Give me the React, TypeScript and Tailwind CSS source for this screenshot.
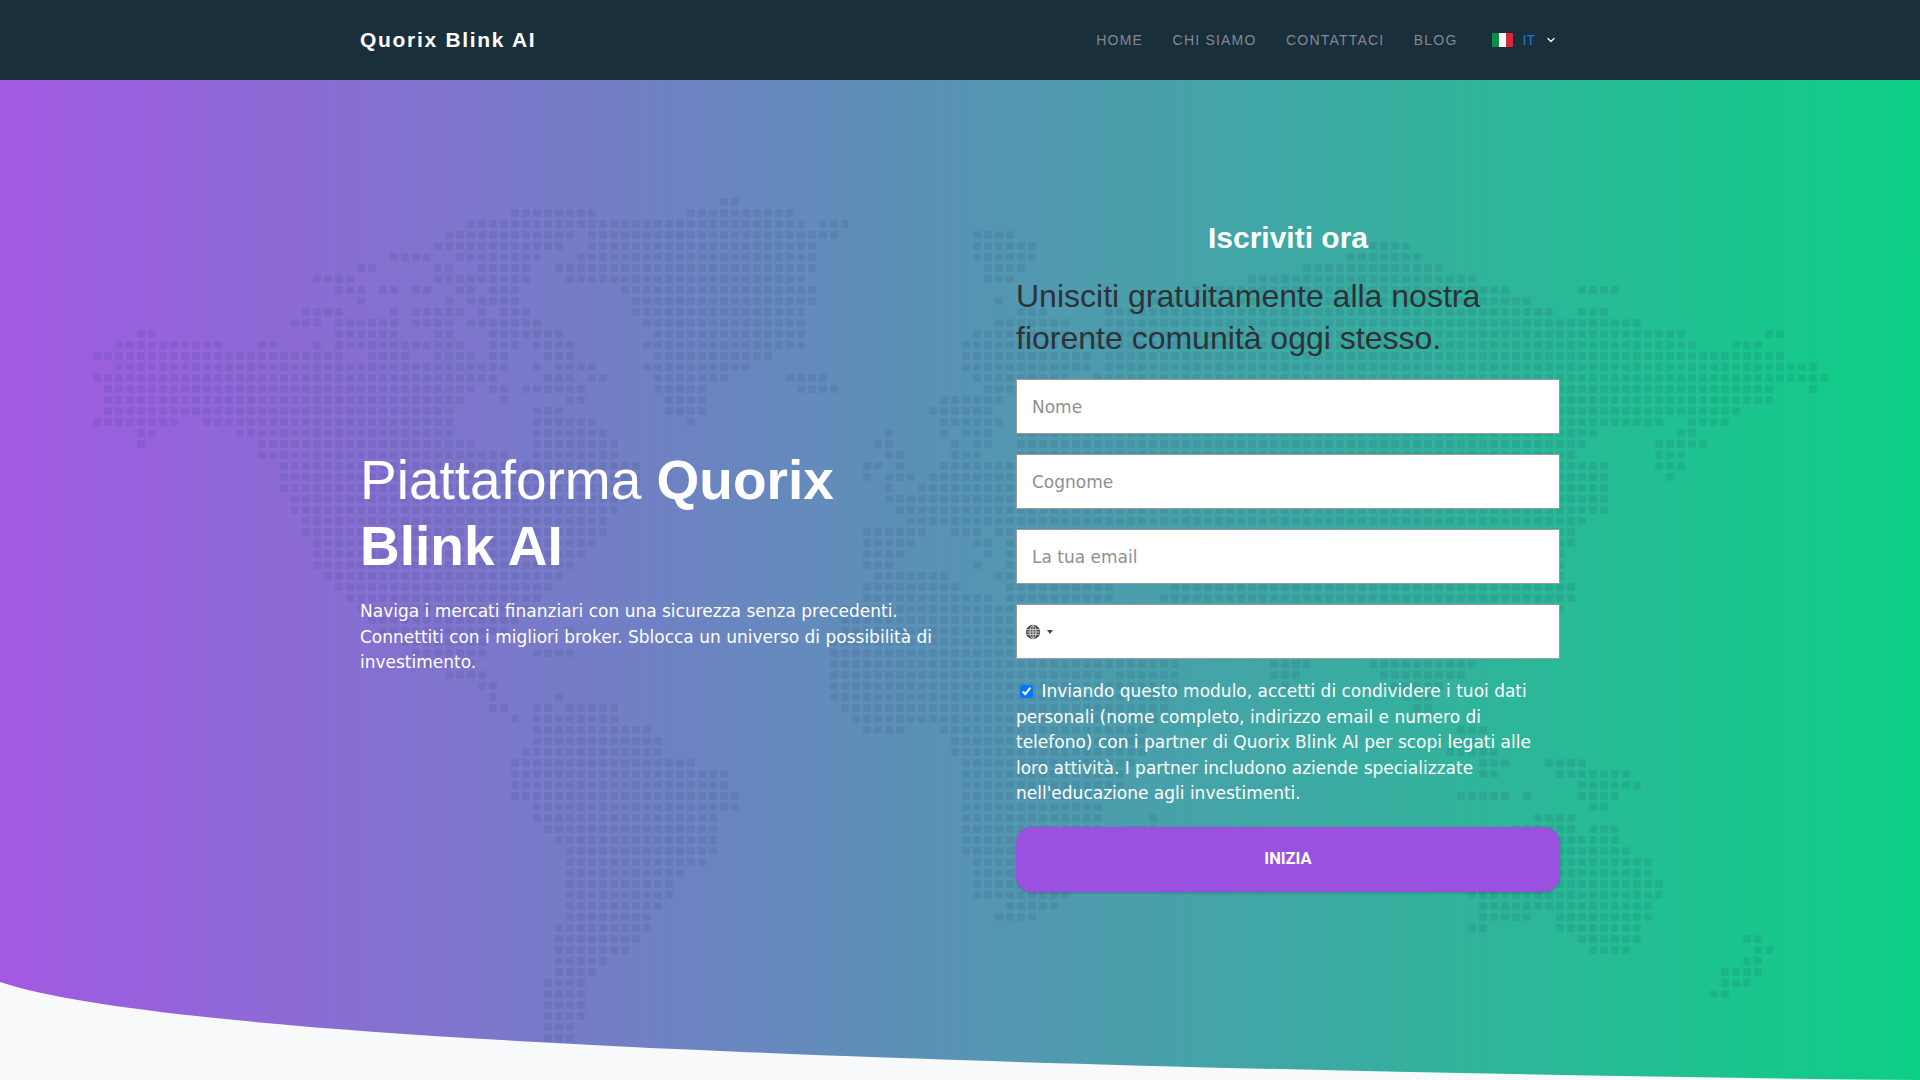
import React from 'react';
import { ChevronDown } from 'lucide-react';

// Dotted world map: one string per row, column runs separated by spaces
const MAP_ROWS = [
  '57-58',
  '38-45 54-63',
  '34-64 66-68',
  '32-43 45-67 80-83',
  '31-42 45-65 80-85 116-119',
  '27-30 33-40 44-65 80-85 114-120',
  '24-25 31-32 35-39 42-65 81-84 110-122',
  '20-23 31-39 43-64 81-83 105-125',
  '22-24 26-27 29-30 33-34 36-38 48-65 100-128 135-138',
  '24 32 34-38 49-65 82 96-130',
  '19-22 27 29-33 35 37-39 49-64 84-86 92-132 135-137',
  '18-20 22-27 29-32 34-40 50-64 82-88 92-140',
  '4-5 22-27 31-32 36-42 51-64 80-88 90-144 152-153',
  '2-11 15-16 20 22-33 36-38 40-43 50-64 79-89 91-145 149-151',
  '0-22 25-28 31-34 36-37 41-43 51-61 79-90 92-153',
  '2-37 40 42-45 50-59 79-90 92-156',
  '0-36 41-43 45-46 51-57 63-66 80-88 91-157',
  '1-34 36-37 39-44 51-55 64-67 81-87 90-152 156',
  '1-33 37 43-44 52-55 77-82 84-152',
  '1-32 40-42 52-55 76-81 84-149',
  '0-7 10-32 40-45 54 77-82 84-142 145-148',
  '4-5 13-32 40-46 72 77 79-81 84-136 144-145',
  '4 15-34 40-47 71-72 78 80-81 84-135 142-146',
  '15-37 40-47 72-73 78-80 84-134 142-144',
  '17-49 70-71 73 77-137 142-144',
  '17-49 70 72-74 76-137 143',
  '17-48 72 75-137',
  '18-48 72-137',
  '18-47 73-137',
  '19-46 74-135',
  '19-46 70-75 78-80 82-90 96-134',
  '20-45 70-74 80-81 83-90 97-134',
  '20-44 70-73 81 83-91 97-133',
  '20-43 70-72 80 83-92 98-133',
  '21-42 71-77 82-93 98-133',
  '22-41 70-78 83-92 98-134',
  '23-40 70-81 83-92 97-134',
  '24-39 68-92 98-133',
  '25-38 68-94 100-132',
  '26-37 43 68-96 101-130',
  '28-35 67-97 103-128',
  '29-35 40-43 67-98 105-112 114-126',
  '30-34 67-98 107-110 116-125',
  '32-35 67-91 93-98 107-109 117-124',
  '35-36 67-98 108 118-122',
  '36 42 67-97 119-121',
  '36-37 40-41 43-47 68-97 120-121',
  '38 40-47 69-96',
  '40-50 70-73 77-95 124-126',
  '40-51 78-95 124-125',
  '39-51 78-95 123-127',
  '38-54 79-94 126-128 132-135',
  '38-57 79-93 126-127 133-139',
  '38-57 79-93 135-140',
  '38-58 79-92 124-128 130 135-138',
  '40-58 79-91 136-137',
  '40-56 79-91 96 131-134',
  '41-56 79-91 94-96 129-134 136-138',
  '42-56 79-92 128-138',
  '43-56 79-91 126-139',
  '43-55 80-90 125-141',
  '43-53 80-89 125-141',
  '43-52 80-88 125-142',
  '43-52 80-88 125-142',
  '43-51 83-87 126-141',
  '43-50 82-85 126-130 133-141',
  '42-50 125-126 133-140',
  '42-49 135-140 150-151',
  '42-48 136-139 151-152',
  '42-46 150-151',
  '42-45 148-151',
  '41-44 148-150',
  '41-44 147-148',
  '41-44',
  '41-44',
  '41-43',
  '41-43',
];

const mapDots = MAP_ROWS.flatMap((row, r) =>
  row.split(' ').flatMap((run) => {
    const [from, to] = run.split('-').map(Number);
    const cols = [];
    for (let c = from; c <= (to ?? from); c++) cols.push([c, r]);
    return cols;
  })
);

const WorldMap = () => (
  <svg className="absolute left-0 top-0" width="1920" height="1000" viewBox="0 0 1920 1000">
    <g fill="#1e3468" fillOpacity="0.11">
      {mapDots.map(([c, r]) => (
        <rect key={`${c}-${r}`} x={93.2 + c * 11} y={118.2 + r * 11} width="7.6" height="7.6" rx="1" />
      ))}
    </g>
  </svg>
);

const BottomCurve = () => (
  <svg className="absolute left-0 top-0" width="1920" height="1000" viewBox="0 80 1920 1000">
    <path d="M0 982C100 1015 380 1036 700 1050C1000 1064 1500 1076 1920 1080L1920 1080L0 1080Z" fill="#f8f9fb" />
  </svg>
);

const GlobeIcon = () => (
  <svg width="16" height="16" viewBox="0 0 16 16" fill="none">
    <circle cx="8" cy="8" r="7.2" fill="#4a4a4a" />
    <g stroke="#e8e8e8" strokeWidth="0.8">
      <ellipse cx="8" cy="8" rx="3" ry="6.4" />
      <path d="M8 1.4V14.6M1.8 5.6H14.2M1.4 8H14.6M1.8 10.4H14.2" />
    </g>
  </svg>
);

const inputClass =
  "w-full h-[55px] bg-white border border-[#9b9b9b] px-[15px] text-[17px] text-[#333] placeholder:text-[#8f8f8f] font-['DejaVu_Sans',sans-serif] outline-none";

const navLinks = ['HOME', 'CHI SIAMO', 'CONTATTACI', 'BLOG'];

export default function App() {
  return (
    <div className="w-[1920px] h-[1080px] overflow-hidden bg-[#f8f9fb] font-['Liberation_Sans',sans-serif]">
      <nav className="h-20 bg-[#1a2f3c]">
        <div className="w-[1200px] h-full mx-auto flex items-center justify-between">
          <a className="text-[21px] font-bold tracking-[1.7px] text-white">Quorix Blink AI</a>
          <div className="flex items-center pr-[3px]">
            <div className="flex items-center gap-[29.5px] text-[14px] tracking-[1.2px] text-[#84898d]">
              {navLinks.map((link) => (
                <a key={link}>{link}</a>
              ))}
            </div>
            <div className="flex items-center ml-[34px]">
              <div className="flex w-[21px] h-[14px]">
                <span className="flex-1 bg-[#0b8f46]" />
                <span className="flex-1 bg-white" />
                <span className="flex-1 bg-[#d32a35]" />
              </div>
              <span className="ml-[10px] text-[14px] text-[#1c78d6]">IT</span>
              <ChevronDown className="ml-[10px] w-[12px] h-[12px] text-white" strokeWidth={2.5} />
            </div>
          </div>
        </div>
      </nav>

      <section className="relative h-[1000px] overflow-hidden bg-[linear-gradient(90deg,#a259e3,#0dcf85)]">
        <WorldMap />
        <BottomCurve />
        <div className="relative w-[1200px] mx-auto pt-[138px] flex items-center justify-between">
          <div className="w-[586px] mt-[13px] text-white">
            <h1 className="text-[55px] leading-[66px] font-normal">
              Piattaforma <b>Quorix Blink AI</b>
            </h1>
            <p className="mt-[20px] text-[17px] leading-[25.5px] font-['DejaVu_Sans',sans-serif]">
              Naviga i mercati finanziari con una sicurezza senza precedenti. Connettiti con i migliori broker. Sblocca un universo di possibilità di investimento.
            </p>
          </div>

          <form className="w-[544px]">
            <h2 className="text-[30px] leading-[40px] font-bold text-white text-center">Iscriviti ora</h2>
            <p className="mt-[17px] text-[32px] leading-[42px] text-[#2e3236]">
              Unisciti gratuitamente alla nostra fiorente comunità oggi stesso.
            </p>
            <div className="mt-[20px] flex flex-col gap-[20px]">
              <input className={inputClass} placeholder="Nome" />
              <input className={inputClass} placeholder="Cognome" />
              <input className={inputClass} placeholder="La tua email" />
              <div className="h-[55px] bg-white border border-[#9b9b9b] flex items-center pl-[8px]">
                <GlobeIcon />
                <span className="ml-[6px] border-x-[3px] border-x-transparent border-t-[4px] border-t-[#444]" />
              </div>
            </div>
            <p className="mt-[20px] text-[17px] leading-[25.5px] text-white font-['DejaVu_Sans',sans-serif]">
              <input type="checkbox" defaultChecked className="ml-[4px] mr-[3px] align-[-1px]" /> Inviando questo modulo, accetti di condividere i tuoi dati personali (nome completo, indirizzo email e numero di telefono) con i partner di Quorix Blink AI per scopi legati alle loro attività. I partner includono aziende specializzate nell'educazione agli investimenti.
            </p>
            <button
              type="button"
              className="mt-[20px] w-full h-[65px] rounded-[16px] bg-[#9b51e0] text-white text-[16.5px] font-bold font-['Roboto',sans-serif] shadow-[0_1px_3px_rgba(0,0,0,0.2)]"
            >
              INIZIA
            </button>
          </form>
        </div>
      </section>
    </div>
  );
}
